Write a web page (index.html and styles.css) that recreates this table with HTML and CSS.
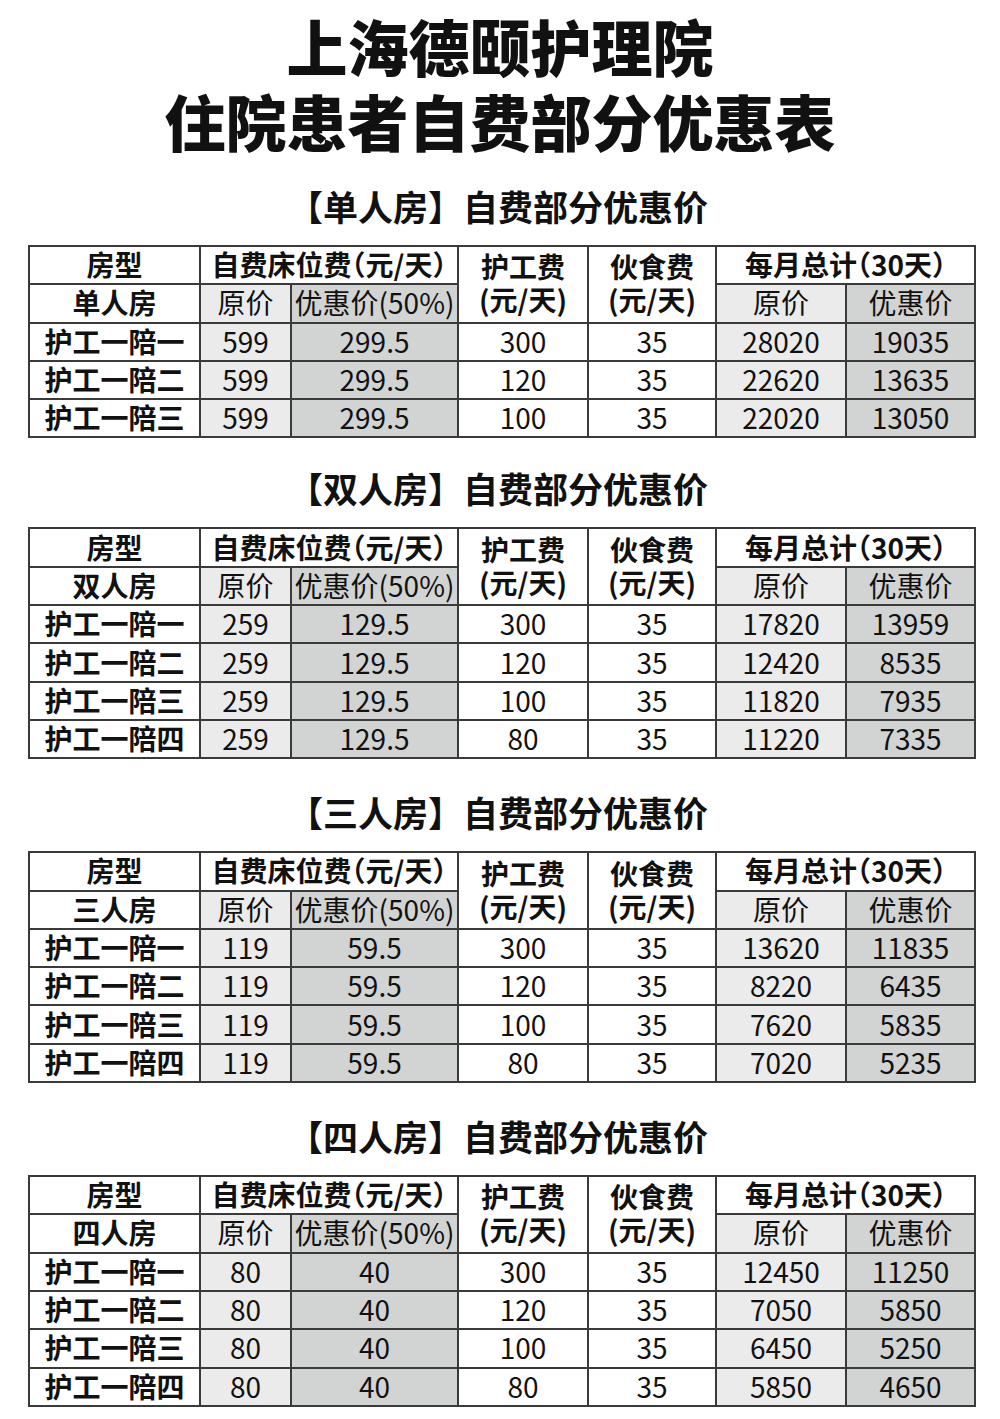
FILE: index.html
```html
<!DOCTYPE html>
<html lang="zh-CN">
<head>
<meta charset="utf-8">
<title>上海德颐护理院 住院患者自费部分优惠表</title>
<link rel="stylesheet" href="styles.css">
</head>
<body>
<div class="page">
  <h1 class="title">上海德颐护理院<br>住院患者自费部分优惠表</h1>

  <section class="block">
    <h2 class="sub">【单人房】自费部分优惠价</h2>
    <table class="grid">
      <colgroup><col class="c1"><col class="c2"><col class="c3"><col class="c4"><col class="c5"><col class="c6"><col class="c7"></colgroup>
      <tr><th>房型</th><th colspan="2" class="wide">自费床位费（元/天）</th><th rowspan="2" class="two">护工费<br>(元/天)</th><th rowspan="2" class="two">伙食费<br>(元/天)</th><th colspan="2" class="wide">每月总计（30天）</th></tr>
      <tr><th>单人房</th><td class="lt">原价</td><td class="dk">优惠价(50%)</td><td class="lt">原价</td><td class="dk">优惠价</td></tr>
      <tr><th>护工一陪一</th><td class="lt">599</td><td class="dk">299.5</td><td>300</td><td>35</td><td class="lt">28020</td><td class="dk">19035</td></tr>
      <tr><th>护工一陪二</th><td class="lt">599</td><td class="dk">299.5</td><td>120</td><td>35</td><td class="lt">22620</td><td class="dk">13635</td></tr>
      <tr><th>护工一陪三</th><td class="lt">599</td><td class="dk">299.5</td><td>100</td><td>35</td><td class="lt">22020</td><td class="dk">13050</td></tr>
    </table>
  </section>

  <section class="block b2">
    <h2 class="sub">【双人房】自费部分优惠价</h2>
    <table class="grid">
      <colgroup><col class="c1"><col class="c2"><col class="c3"><col class="c4"><col class="c5"><col class="c6"><col class="c7"></colgroup>
      <tr><th>房型</th><th colspan="2" class="wide">自费床位费（元/天）</th><th rowspan="2" class="two">护工费<br>(元/天)</th><th rowspan="2" class="two">伙食费<br>(元/天)</th><th colspan="2" class="wide">每月总计（30天）</th></tr>
      <tr><th>双人房</th><td class="lt">原价</td><td class="dk">优惠价(50%)</td><td class="lt">原价</td><td class="dk">优惠价</td></tr>
      <tr><th>护工一陪一</th><td class="lt">259</td><td class="dk">129.5</td><td>300</td><td>35</td><td class="lt">17820</td><td class="dk">13959</td></tr>
      <tr><th>护工一陪二</th><td class="lt">259</td><td class="dk">129.5</td><td>120</td><td>35</td><td class="lt">12420</td><td class="dk">8535</td></tr>
      <tr><th>护工一陪三</th><td class="lt">259</td><td class="dk">129.5</td><td>100</td><td>35</td><td class="lt">11820</td><td class="dk">7935</td></tr>
      <tr><th>护工一陪四</th><td class="lt">259</td><td class="dk">129.5</td><td>80</td><td>35</td><td class="lt">11220</td><td class="dk">7335</td></tr>
    </table>
  </section>

  <section class="block b3">
    <h2 class="sub">【三人房】自费部分优惠价</h2>
    <table class="grid">
      <colgroup><col class="c1"><col class="c2"><col class="c3"><col class="c4"><col class="c5"><col class="c6"><col class="c7"></colgroup>
      <tr><th>房型</th><th colspan="2" class="wide">自费床位费（元/天）</th><th rowspan="2" class="two">护工费<br>(元/天)</th><th rowspan="2" class="two">伙食费<br>(元/天)</th><th colspan="2" class="wide">每月总计（30天）</th></tr>
      <tr><th>三人房</th><td class="lt">原价</td><td class="dk">优惠价(50%)</td><td class="lt">原价</td><td class="dk">优惠价</td></tr>
      <tr><th>护工一陪一</th><td class="lt">119</td><td class="dk">59.5</td><td>300</td><td>35</td><td class="lt">13620</td><td class="dk">11835</td></tr>
      <tr><th>护工一陪二</th><td class="lt">119</td><td class="dk">59.5</td><td>120</td><td>35</td><td class="lt">8220</td><td class="dk">6435</td></tr>
      <tr><th>护工一陪三</th><td class="lt">119</td><td class="dk">59.5</td><td>100</td><td>35</td><td class="lt">7620</td><td class="dk">5835</td></tr>
      <tr><th>护工一陪四</th><td class="lt">119</td><td class="dk">59.5</td><td>80</td><td>35</td><td class="lt">7020</td><td class="dk">5235</td></tr>
    </table>
  </section>

  <section class="block b4">
    <h2 class="sub">【四人房】自费部分优惠价</h2>
    <table class="grid">
      <colgroup><col class="c1"><col class="c2"><col class="c3"><col class="c4"><col class="c5"><col class="c6"><col class="c7"></colgroup>
      <tr><th>房型</th><th colspan="2" class="wide">自费床位费（元/天）</th><th rowspan="2" class="two">护工费<br>(元/天)</th><th rowspan="2" class="two">伙食费<br>(元/天)</th><th colspan="2" class="wide">每月总计（30天）</th></tr>
      <tr><th>四人房</th><td class="lt">原价</td><td class="dk">优惠价(50%)</td><td class="lt">原价</td><td class="dk">优惠价</td></tr>
      <tr><th>护工一陪一</th><td class="lt">80</td><td class="dk">40</td><td>300</td><td>35</td><td class="lt">12450</td><td class="dk">11250</td></tr>
      <tr><th>护工一陪二</th><td class="lt">80</td><td class="dk">40</td><td>120</td><td>35</td><td class="lt">7050</td><td class="dk">5850</td></tr>
      <tr><th>护工一陪三</th><td class="lt">80</td><td class="dk">40</td><td>100</td><td>35</td><td class="lt">6450</td><td class="dk">5250</td></tr>
      <tr><th>护工一陪四</th><td class="lt">80</td><td class="dk">40</td><td>80</td><td>35</td><td class="lt">5850</td><td class="dk">4650</td></tr>
    </table>
  </section>
</div>
</body>
</html>
```

FILE: styles.css
```css
html, body {
  margin: 0;
  padding: 0;
  background: #ffffff;
}
body {
  font-family: "Noto Sans CJK SC", "Noto Sans", sans-serif;
  color: #111111;
}
.page {
  width: 1000px;
  padding: 8px 0 0 0;
}
.title {
  margin: 0;
  text-align: center;
  font-size: 61px;
  line-height: 75px;
  font-weight: 900;
  letter-spacing: 0;
}
.block {
  margin-top: 26px;
}
.b2 { margin-top: 28px; }
.b3 { margin-top: 31px; }
.b4 { margin-top: 31px; }
.sub {
  margin: 0 0 17px 0;
  padding-right: 4px;
  text-align: center;
  font-size: 35px;
  line-height: 44px;
  font-weight: 700;
}
.grid {
  margin-left: 28px;
  width: 946px;
  border-collapse: collapse;
  table-layout: fixed;
  font-size: 28px;
}
.c1 { width: 171px; }
.c2 { width: 91px; }
.c3 { width: 167px; }
.c4 { width: 130px; }
.c5 { width: 128px; }
.c6 { width: 130px; }
.c7 { width: 129px; }
.grid th,
.grid td {
  border: 2px solid #3a3a3a;
  padding: 0 0 2px 0;
  height: 34.3px;
  line-height: 34px;
  text-align: center;
  vertical-align: middle;
  white-space: nowrap;
}
.grid th {
  font-weight: 700;
}
.grid td {
  font-weight: 400;
}
.grid .wide {
  font-feature-settings: "halt";
}
.grid .two {
  line-height: 33px;
}
.grid .lt {
  background: #ebebeb;
}
.grid .dk {
  background: #d2d3d3;
}
```
